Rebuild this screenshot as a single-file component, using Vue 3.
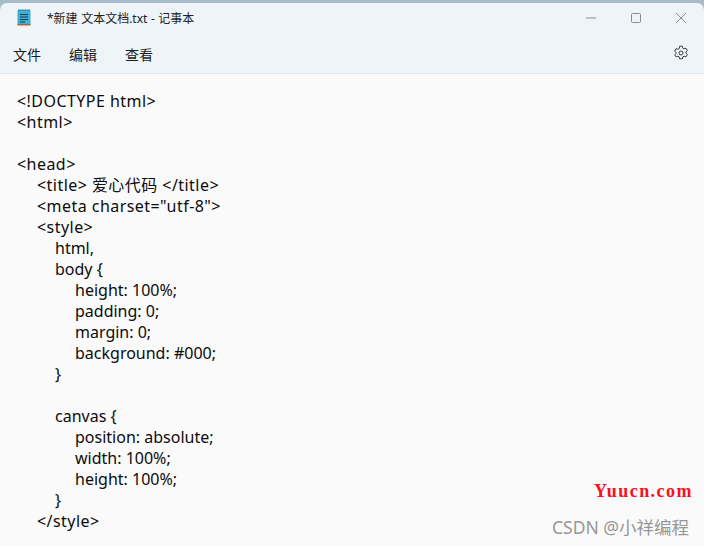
<script setup>
const lines = [
  [0, '<!DOCTYPE html>'], [0, '<html>'], [0, ''], [0, '<head>'],
  [1, '<title> 爱心代码 </title>'], [1, '<meta charset="utf-8">'], [1, '<style>'],
  [2, 'html,'], [2, 'body {'], [3, 'height: 100%;'], [3, 'padding: 0;'], [3, 'margin: 0;'],
  [3, 'background: #000;'], [2, '}'], [2, ''], [2, 'canvas {'],
  [3, 'position: absolute;'], [3, 'width: 100%;'], [3, 'height: 100%;'], [2, '}'], [1, '</style>'],
]
const isTag = (s) => s.startsWith('<')
</script>

<template>
  <div class="win">
    <div class="chrome">
      <header class="titlebar">
        <svg class="app" width="14" height="17" viewBox="0 0 14 17">
          <rect x="0.5" y="1" width="13" height="15" rx="1" fill="#3fb0d2" />
          <rect x="0.5" y="15" width="13" height="1.5" fill="#a9663a" />
          <path d="M2 0v2M4 0v2M6 0v2M8 0v2M10 0v2M12 0v2" stroke="#2b6f8e" stroke-width="0.8" />
          <path d="M3 5.500h8M3 8h8M3 10.500h8M3 13h5" stroke="#123f57" stroke-width="1" />
        </svg>
        <span class="title">*新建 文本文档.txt - 记事本</span>
        <div class="controls">
          <svg width="12" height="12" viewBox="0 0 12 12"><path d="M1 6h10" stroke="#8a8d8f" stroke-width="1" /></svg>
          <svg width="12" height="12" viewBox="0 0 12 12"><rect x="1.500" y="1.500" width="9" height="9" rx="1" fill="none" stroke="#8a8d8f" /></svg>
          <svg width="12" height="12" viewBox="0 0 12 12"><path d="M1 1l10 10M11 1L1 11" stroke="#8a8d8f" stroke-width="1" /></svg>
        </div>
      </header>
      <nav class="menubar">
        <span>文件</span><span>编辑</span><span>查看</span>
        <svg class="gear" width="16" height="16" viewBox="0 0 16 16" fill="none" stroke="#3a3d3f" stroke-width="1">
          <path d="M6.600 1.200h2.800l.4 1.900 1.300.7 1.900-.6 1.400 2.400-1.500 1.300v1.200l1.500 1.300-1.400 2.400-1.900-.6-1.300.7-.4 1.900H6.600l-.4-1.900-1.300-.7-1.900.6L1.600 9.900l1.500-1.300V7.400L1.600 6.100 3 3.700l1.900.6 1.300-.7z" stroke-linejoin="round" />
          <circle cx="8" cy="8" r="2" />
        </svg>
      </nav>
    </div>
    <main class="editor">
      <div
        v-for="(l, i) in lines"
        :key="i"
        class="line"
        :class="{ tag: isTag(l[1]) }"
        :style="{ paddingLeft: [0, 20, 38, 58][l[0]] + 'px' }"
      >{{ l[1] || ' ' }}</div>
    </main>
    <div class="mark1">Yuucn.com</div>
    <div class="mark2">CSDN @小祥编程</div>
  </div>
</template>

<style scoped>
.win {
  position: relative;
  width: 704px;
  height: 546px;
  overflow: hidden;
  background: #a7bcc6;
  padding-top: 3px;
  box-sizing: border-box;
  font-family: "Noto Sans", "Noto Sans CJK SC", sans-serif;
}
.chrome {
  background: #eef4f7;
  border-radius: 7px 7px 0 0;
  border-bottom: 1px solid #e2e5e7;
  height: 71px;
  box-sizing: border-box;
}
.titlebar {
  display: flex;
  align-items: center;
  height: 29px;
  padding-left: 17px;
}
.title {
  margin-left: 16px;
  font-size: 12px;
  word-spacing: 0.4px;
  color: #222;
}
.controls {
  margin-left: auto;
  display: flex;
  gap: 33px;
  padding-right: 17px;
}
.menubar {
  display: flex;
  align-items: center;
  height: 41px;
  padding: 2px 15px 0 13px;
  box-sizing: border-box;
  gap: 28px;
  font-size: 14px;
  color: #1c1c1c;
}
.gear { margin-left: auto; margin-top: -2px; }
.editor {
  background: #fafafa;
  height: 472px;
  padding-top: 17px;
  padding-left: 17px;
  box-sizing: border-box;
}
.line {
  height: 21px;
  line-height: 21px;
  font-size: 16px;
  color: #0c0c0c;
  white-space: pre;
}
.tag { letter-spacing: 0.45px; }
.mark1 {
  position: absolute;
  left: 594px;
  top: 481px;
  font: bold 18px "Liberation Serif", serif;
  color: #fa0f1e;
  letter-spacing: 1.45px;
}
.mark2 {
  position: absolute;
  left: 552px;
  top: 514px;
  font-size: 17.5px;
  color: #979797;
  white-space: nowrap;
}
</style>
